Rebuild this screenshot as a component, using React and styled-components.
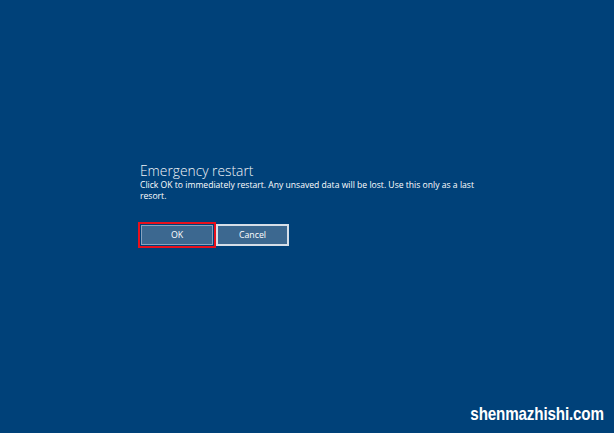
import React from 'react';
import styled, { createGlobalStyle } from 'styled-components';

const GlobalStyle = createGlobalStyle`
    html, body {
        margin: 0;
        padding: 0;
        background: #004179;
    }
`;

const Screen = styled.div`
    position: relative;
    width: 614px;
    height: 433px;
    background: #004179;
    font-family: "Segoe UI", "Open Sans", "Noto Sans", sans-serif;
    color: #ffffff;
    overflow: hidden;
    box-sizing: border-box;
    padding: 161px 0 0 140px;
`;

const Dialog = styled.div`
    display: flex;
    flex-direction: column;
    width: 340px;
`;

const Title = styled.h1`
    margin: 0;
    font-size: 13.8px;
    font-weight: 300;
    line-height: 19px;
    color: #f2f5f8;
`;

const Message = styled.p`
    margin: 0;
    font-size: 8.6px;
    line-height: 11px;
    font-weight: 400;
`;

const Buttons = styled.div`
    display: flex;
    align-items: center;
    margin-top: 20px;
    margin-left: -2px;
`;

const FocusRing = styled.div`
    display: flex;
    padding: 1px;
    border: 2px solid #e8101c;
`;

const Button = styled.button`
    box-sizing: border-box;
    width: ${p => p.$width}px;
    height: ${p => p.$height}px;
    background: #3c6890;
    color: #ffffff;
    border: ${p => p.$border}px solid ${p => p.$line};
    font-family: inherit;
    font-size: 8.8px;
    padding: 0;
    cursor: pointer;
`;

const Watermark = styled.div`
    position: absolute;
    right: 10px;
    bottom: 8px;
    font-family: "Liberation Sans", "DejaVu Sans", sans-serif;
    font-weight: 700;
    font-size: 19px;
    letter-spacing: -0.2px;
    color: #ffffff;
    transform: scaleX(0.8);
    transform-origin: right center;
`;

export default function App() {
    return (
        <>
            <GlobalStyle />
            <Screen>
                <Dialog>
                    <Title>Emergency restart</Title>
                    <Message>
                        Click OK to immediately restart. Any unsaved data will be lost. Use this only as a last resort.
                    </Message>
                    <Buttons>
                        <FocusRing>
                            <Button $width={72} $height={20} $border={1} $line="#86a3bf">OK</Button>
                        </FocusRing>
                        <Button $width={73} $height={22} $border={2} $line="#d6dee8">Cancel</Button>
                    </Buttons>
                </Dialog>
                <Watermark>shenmazhishi.com</Watermark>
            </Screen>
        </>
    );
}
